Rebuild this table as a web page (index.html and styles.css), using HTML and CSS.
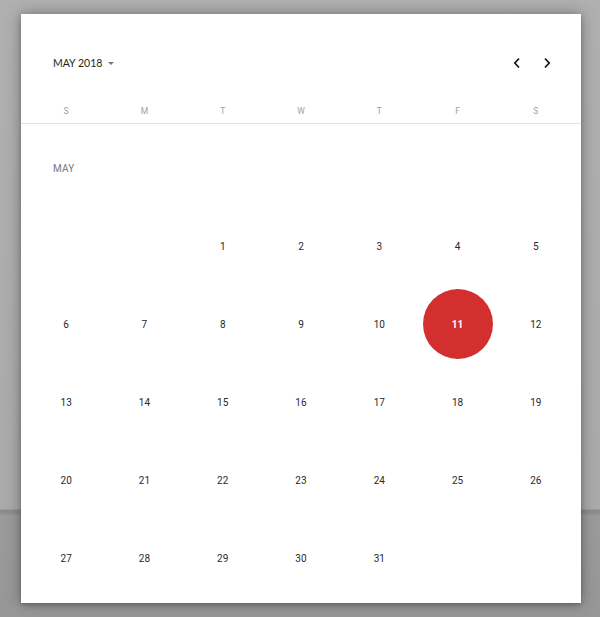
FILE: index.html
```html
<!DOCTYPE html>
<html>
<head>
<meta charset="utf-8">
<link rel="stylesheet" href="styles.css">
</head>
<body>
<div class="card">
  <div class="header">
    <div class="title">MAY 2018 <span class="caret"></span></div>
    <div class="nav">
      <button class="navbtn" aria-label="Previous month">
        <svg width="10" height="12" viewBox="0 0 10 12"><path d="M7 1.5 L2.8 6 L7 10.5" fill="none" stroke="#1a1a1a" stroke-width="1.8"/></svg>
      </button>
      <button class="navbtn" aria-label="Next month">
        <svg width="10" height="12" viewBox="0 0 10 12"><path d="M3 1.5 L7.2 6 L3 10.5" fill="none" stroke="#1a1a1a" stroke-width="1.8"/></svg>
      </button>
    </div>
  </div>
  <div class="weekdays">
    <span>S</span><span>M</span><span>T</span><span>W</span><span>T</span><span>F</span><span>S</span>
  </div>
  <div class="month-label">MAY</div>
  <div class="days">
    <span></span><span></span>
    <span class="day">1</span><span class="day">2</span><span class="day">3</span><span class="day">4</span><span class="day">5</span>
    <span class="day">6</span><span class="day">7</span><span class="day">8</span><span class="day">9</span><span class="day">10</span><span class="day selected"><b>11</b></span><span class="day">12</span>
    <span class="day">13</span><span class="day">14</span><span class="day">15</span><span class="day">16</span><span class="day">17</span><span class="day">18</span><span class="day">19</span>
    <span class="day">20</span><span class="day">21</span><span class="day">22</span><span class="day">23</span><span class="day">24</span><span class="day">25</span><span class="day">26</span>
    <span class="day">27</span><span class="day">28</span><span class="day">29</span><span class="day">30</span><span class="day">31</span>
  </div>
</div>
</body>
</html>
```
FILE: styles.css
```css
html, body {
  margin: 0;
  padding: 0;
}
body {
  width: 600px;
  height: 617px;
  overflow: hidden;
  font-family: Roboto, "Liberation Sans", sans-serif;
  background:
    linear-gradient(to bottom,
      #b0b0b0 0, #aaaaaa 509px,
      #8c8c8c 510px, #8f8f8f 514px,
      #9b9b9b 515px, #979797 617px);
}
.card {
  margin: 14px 0 0 21px;
  width: 560px;
  height: 589px;
  background: #fff;
  box-shadow: 0 0 14px rgba(0, 0, 0, 0.35), 0 2px 4px rgba(0, 0, 0, 0.2);
  display: flex;
  flex-direction: column;
}
.header {
  display: flex;
  justify-content: space-between;
  align-items: center;
  height: 18px;
  padding: 40px 22px 0 32px;
}
.title {
  font-family: "Lato", "Liberation Sans", sans-serif;
  font-size: 10.5px;
  color: #1e1e1e;
  display: flex;
  align-items: center;
  gap: 3px;
}
.caret {
  display: inline-block;
  width: 0;
  height: 0;
  border-left: 3.5px solid transparent;
  border-right: 3.5px solid transparent;
  border-top: 3.5px solid #777;
  margin-left: 3px;
}
.nav {
  display: flex;
  gap: 6px;
}
.navbtn {
  width: 24px;
  height: 18px;
  padding: 0;
  border: 0;
  background: transparent;
  display: flex;
  align-items: center;
  justify-content: center;
}
.weekdays {
  display: grid;
  grid-template-columns: repeat(7, 1fr);
  padding: 0 6px 3px 6px;
  margin-top: 30px;
  height: 18px;
  line-height: 18px;
  border-bottom: 1px solid #e2e2e2;
  font-size: 8.5px;
  color: #a0a0a0;
  text-align: center;
}
.month-label {
  margin: 38px 0 31px 32px;
  height: 14px;
  line-height: 14px;
  font-size: 10px;
  color: #777;
  letter-spacing: 0.2px;
}
.days {
  display: grid;
  grid-template-columns: repeat(7, 1fr);
  grid-auto-rows: 78px;
  padding: 0 6px 0 6px;
  font-size: 10px;
  color: #2a2a2a;
}
.day {
  display: flex;
  align-items: center;
  justify-content: center;
}
.day.selected b {
  width: 70px;
  height: 70px;
  border-radius: 50%;
  background: #d32f2f;
  color: #fff;
  font-weight: 700;
  display: flex;
  align-items: center;
  justify-content: center;
}
```
